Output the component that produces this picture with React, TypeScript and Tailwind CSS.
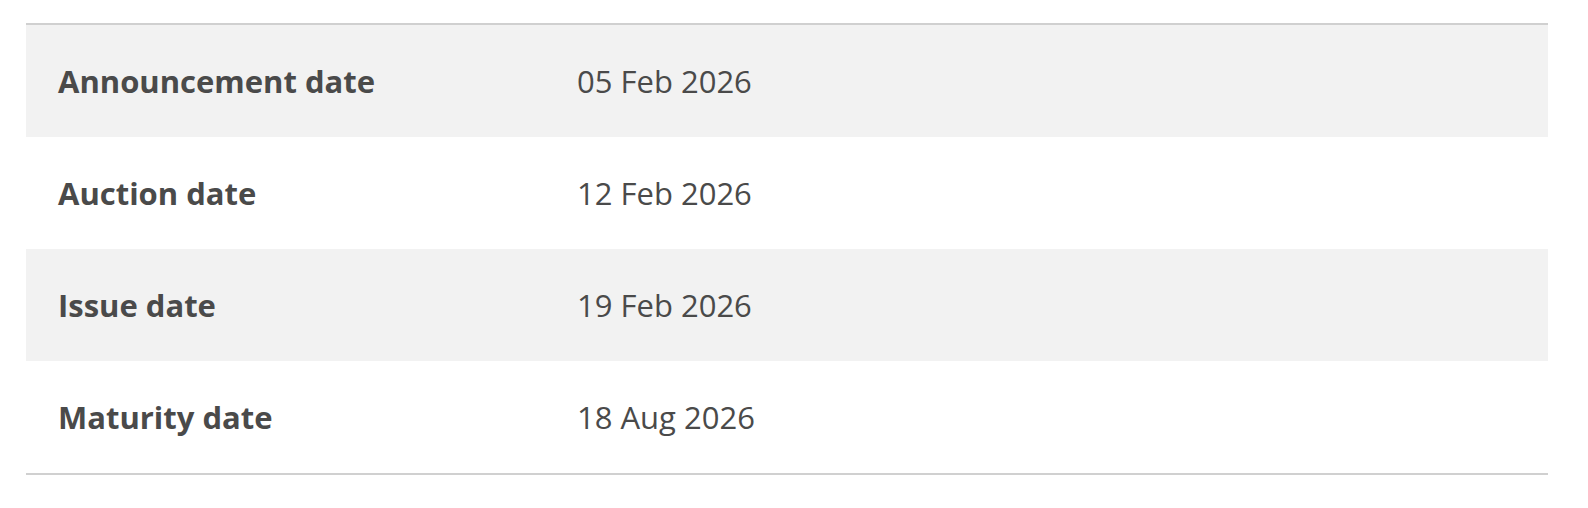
import React from "react";

const rows = [
  { label: "Announcement date", value: "05 Feb 2026" },
  { label: "Auction date", value: "12 Feb 2026" },
  { label: "Issue date", value: "19 Feb 2026" },
  { label: "Maturity date", value: "18 Aug 2026" },
];

export default function App() {
  return (
    <div className="bg-white w-[1588px] h-[508px] pt-[23px] pl-[26px] pr-[40px]" style={{ fontFamily: '"Open Sans", "Lato", sans-serif' }}>
      <div className="border-t-2 border-b-2 border-[#d0d0d0]">
        {rows.map((r, i) => (
          <div
            key={r.label}
            className={`grid grid-cols-[519px_1fr] items-center h-[112px] pl-[32px] text-[#4a4a4a] ${i % 2 === 0 ? "bg-[#f2f2f2]" : "bg-white"}`}
          >
            <div className="text-[31px] font-bold">{r.label}</div>
            <div className="text-[31px]">{r.value}</div>
          </div>
        ))}
      </div>
    </div>
  );
}
